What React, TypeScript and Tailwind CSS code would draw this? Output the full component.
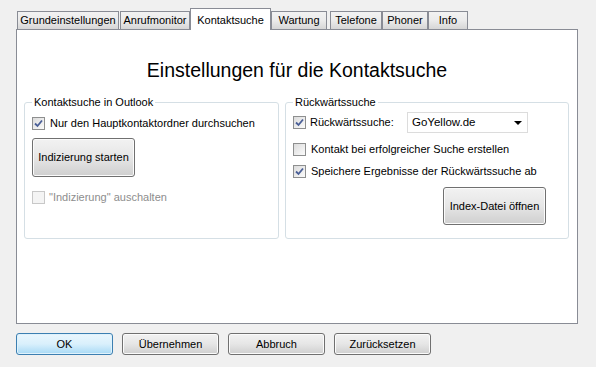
import React from "react";

function Check({ checked, disabled }: { checked?: boolean; disabled?: boolean }) {
  return (
    <div
      className={
        "w-[13px] h-[13px] shrink-0 border flex items-center justify-center " +
        (disabled
          ? "border-[#c8c8c8] bg-[#f4f4f4]"
          : "border-[#8e8f8f] bg-gradient-to-br from-[#dcdcdc] to-[#fbfbfb]")
      }
    >
      {checked && (
        <svg width="9" height="9" viewBox="0 0 9 9">
          <path d="M1 4.5 L3.5 7 L8 1.5" fill="none" stroke="#4a5f97" strokeWidth="1.8" />
        </svg>
      )}
    </div>
  );
}

function Tab({ label, w, selected, ml = 0 }: { label: string; w: number; selected?: boolean; ml?: number }) {
  if (selected) {
    return (
      <div
        style={{ width: w, marginLeft: ml }}
        className="relative z-10 h-[22px] mb-[-1px] bg-white border border-b-0 border-[#898c95] flex items-start justify-center pt-[3px] whitespace-nowrap"
      >
        {label}
      </div>
    );
  }
  return (
    <div
      style={{ width: w, marginLeft: ml }}
      className="h-[18px] border border-b-0 border-[#898c95] bg-gradient-to-b from-[#f2f2f2] via-[#ebebeb] to-[#d6d6d6] flex items-center justify-center whitespace-nowrap"
    >
      {label}
    </div>
  );
}

function Btn({ label, w, h, def, className = "" }: { label: string; w: number; h: number; def?: boolean; className?: string }) {
  return (
    <div
      style={{ width: w, height: h }}
      className={
        "rounded-[3px] border flex items-center justify-center whitespace-nowrap " +
        (def
          ? "border-[#3c7fb1] bg-gradient-to-b from-[#eaf6fd] via-[#d9f0fc] to-[#a7d9f5] shadow-[inset_0_0_0_1px_#dff2fc]"
          : "border-[#707070] bg-gradient-to-b from-[#f2f2f2] via-[#e6e6e6] to-[#cfcfcf] shadow-[inset_0_0_0_1px_#fbfbfb]") +
        " " +
        className
      }
    >
      {label}
    </div>
  );
}

export default function App() {
  return (
    <div className="w-[596px] h-[367px] bg-[#f0f0f0] font-['Liberation_Sans',Arial,sans-serif] text-[11px] text-black flex flex-col overflow-hidden">
      <div className="h-[29px] flex items-end pl-[17px]">
        <Tab label="Grundeinstellungen" w={102} />
        <Tab label="Anrufmonitor" w={70} ml={1} />
        <Tab label="Kontaktsuche" w={81} selected />
        <Tab label="Wartung" w={56} ml={0} />
        <Tab label="Telefone" w={52} ml={3} />
        <Tab label="Phoner" w={46} ml={0} />
        <Tab label="Info" w={40} ml={0} />
      </div>
      <div className="ml-[16px] w-[562px] h-[295px] bg-white border border-[#898c95] flex flex-col">
        <div className="mt-[28px] h-[24px] leading-[24px] text-[19.5px] text-center whitespace-nowrap">
          Einstellungen für die Kontaktsuche
        </div>
        <div className="mt-[13px] ml-[7px] flex gap-[6px]">
          <fieldset className="w-[255px] h-[144px] border border-[#d5dfe5] rounded-[3px] px-[7px] flex flex-col">
            <legend className="px-[2px] leading-[14px]">Kontaktsuche in Outlook</legend>
            <div className="mt-[7px] h-[14px] flex items-center gap-[5px] whitespace-nowrap">
              <Check checked />
              <span>Nur den Hauptkontaktordner durchsuchen</span>
            </div>
            <Btn label="Indizierung starten" w={103} h={39} className="mt-[8px]" />
            <div className="mt-[13px] h-[14px] flex items-center gap-[4px] text-[#8d8d8d] whitespace-nowrap">
              <Check disabled />
              <span>"Indizierung" auschalten</span>
            </div>
          </fieldset>
          <fieldset className="w-[284px] h-[144px] border border-[#d5dfe5] rounded-[3px] px-[7px] flex flex-col">
            <legend className="px-[2px] leading-[14px]">Rückwärtssuche</legend>
            <div className="mt-[3px] h-[21px] flex items-center whitespace-nowrap">
              <Check checked />
              <span className="ml-[4px] w-[97px]">Rückwärtssuche:</span>
              <div className="w-[121px] h-[21px] border border-[#dcdcdc] flex items-center pl-[4px] pr-[5px] justify-between">
                <span className="text-[11.5px]">GoYellow.de</span>
                <svg width="8" height="4" viewBox="0 0 8 4">
                  <path d="M0 0 L8 0 L4 4 Z" fill="#000" />
                </svg>
              </div>
            </div>
            <div className="mt-[9px] h-[14px] flex items-center gap-[5px] whitespace-nowrap">
              <Check />
              <span>Kontakt bei erfolgreicher Suche erstellen</span>
            </div>
            <div className="mt-[8px] h-[14px] flex items-center gap-[5px] whitespace-nowrap">
              <Check checked />
              <span>Speichere Ergebnisse der Rückwärtssuche ab</span>
            </div>
            <Btn label="Index-Datei öffnen" w={103} h={38} className="mt-[9px] ml-auto mr-[15px]" />
          </fieldset>
        </div>
      </div>
      <div className="ml-[16px] mt-[9px] flex gap-[9px]">
        <Btn label="OK" w={97} h={22} def />
        <Btn label="Übernehmen" w={97} h={22} />
        <Btn label="Abbruch" w={97} h={22} />
        <Btn label="Zurücksetzen" w={97} h={22} />
      </div>
    </div>
  );
}
